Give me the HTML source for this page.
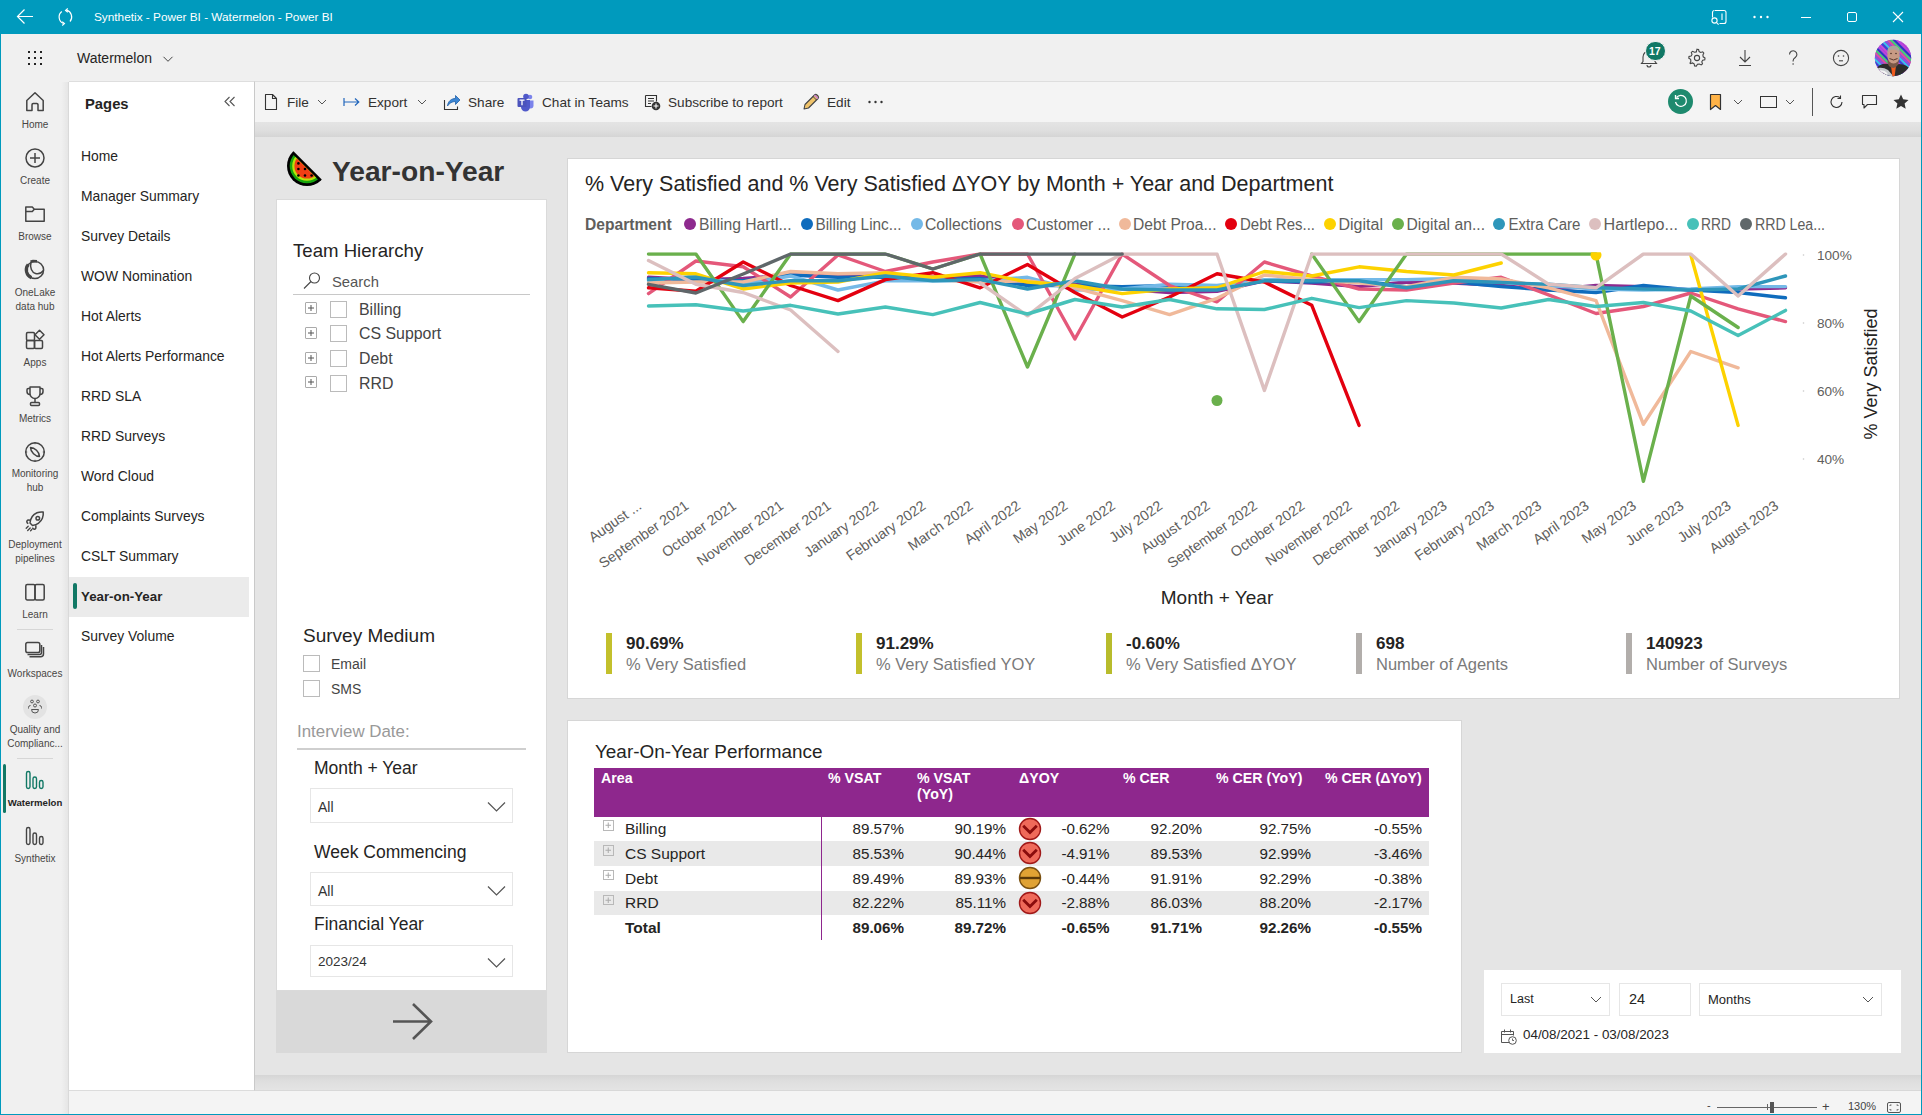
<!DOCTYPE html>
<html><head><meta charset="utf-8">
<style>
*{box-sizing:border-box}
html,body{margin:0;padding:0}
body{width:1922px;height:1115px;position:relative;overflow:hidden;background:#f0f0f0;font-family:"Liberation Sans",sans-serif;color:#252423}
.a{position:absolute}
.t{position:absolute;white-space:nowrap;line-height:1}
svg{position:absolute;overflow:visible}
</style></head><body>

<!-- title bar -->
<div class="a" style="left:0;top:0;width:1922px;height:34px;background:#009abd"></div>
<div class="a" style="left:0;top:34px;width:1px;height:1081px;background:#009abd"></div>
<div class="a" style="left:1921px;top:34px;width:1px;height:1081px;background:#009abd"></div>
<div class="a" style="left:0;top:1114px;width:1922px;height:1px;background:#009abd"></div>
<div class="t" style="left:94px;top:12px;font-size:11.8px;color:#fff">Synthetix - Power BI - Watermelon - Power BI</div>

<!-- workspace header -->
<div class="a" style="left:1px;top:34px;width:1920px;height:47px;background:#f0f0f0"></div>
<div class="t" style="left:77px;top:51px;font-size:14px;color:#252423">Watermelon</div>


<!-- title bar icons -->
<svg width="20" height="20" style="left:15px;top:7px"><path d="M2.5 9.5H18" stroke="#fff" stroke-width="1"/><path d="M9.5 2.5L2.5 9.5L9.5 16.5" fill="none" stroke="#fff" stroke-width="1.2"/></svg>
<svg width="20" height="22" style="left:55px;top:6px"><path d="M6.8 5.5A7 7 0 0 0 8.5 17.5M15 15.5A7 7 0 0 0 11.5 4.2" fill="none" stroke="#fff" stroke-width="1.2"/><path d="M12.8 2.5L10.6 4.4 12.8 6.2M7.2 15.8L9.4 17.6 7.2 19.5" fill="none" stroke="#fff" stroke-width="1.2"/></svg>
<svg width="20" height="20" style="left:1709px;top:8px"><path d="M6 2.5h9a2 2 0 0 1 2 2v9a2 2 0 0 1-2 2h-4.5M3.5 9.5V4.5a2 2 0 0 1 2-2" fill="none" stroke="#fff" stroke-width="1.1"/><path d="M13 5.5v6.5" stroke="#fff" stroke-width="1.1"/><circle cx="5.5" cy="12.5" r="2.6" fill="none" stroke="#fff" stroke-width="1.1"/><path d="M7.3 14.3l2.3 2.3" stroke="#fff" stroke-width="1.1"/></svg>
<svg width="20" height="6" style="left:1751px;top:14px"><circle cx="3.5" cy="3" r="1.2" fill="#fff"/><circle cx="10" cy="3" r="1.2" fill="#fff"/><circle cx="16.5" cy="3" r="1.2" fill="#fff"/></svg>
<div class="a" style="left:1801px;top:17px;width:10px;height:1px;background:#fff"></div>
<div class="a" style="left:1847px;top:12px;width:10px;height:10px;border:1px solid #fff;border-radius:2px"></div>
<svg width="14" height="14" style="left:1891px;top:10px"><path d="M2 2L12 12M12 2L2 12" stroke="#fff" stroke-width="1.1"/></svg>

<!-- waffle -->
<div class="a" style="left:28px;top:51px;width:2px;height:2px;background:#222"></div><div class="a" style="left:28px;top:57px;width:2px;height:2px;background:#222"></div><div class="a" style="left:28px;top:63px;width:2px;height:2px;background:#222"></div><div class="a" style="left:34px;top:51px;width:2px;height:2px;background:#222"></div><div class="a" style="left:34px;top:57px;width:2px;height:2px;background:#222"></div><div class="a" style="left:34px;top:63px;width:2px;height:2px;background:#222"></div><div class="a" style="left:40px;top:51px;width:2px;height:2px;background:#222"></div><div class="a" style="left:40px;top:57px;width:2px;height:2px;background:#222"></div><div class="a" style="left:40px;top:63px;width:2px;height:2px;background:#222"></div>
<svg width="12" height="8" style="left:162px;top:55px"><path d="M1.5 1.8l4.5 4.5 4.5-4.5" fill="none" stroke="#444" stroke-width="1"/></svg>

<!-- header right icons -->
<svg width="20" height="20" style="left:1639px;top:48px"><path d="M4 13.5V9a6 6 0 0 1 12 0v4.5l1.5 2H2.5z M8 17a2 2 0 0 0 4 0" fill="none" stroke="#444" stroke-width="1.1"/></svg>
<div class="a" style="left:1645px;top:41px;width:21px;height:20px;border-radius:10px;background:#117865;border:1.5px solid #f0f0f0"></div>
<div class="t" style="left:1649px;top:45.5px;font-size:10.5px;color:#fff;font-weight:bold">17</div>
<svg width="22" height="22" style="left:1686px;top:47px"><path d="M11 2.2l1.6.3.5 2.1 1.6.9 2-.7 1.1 1.3-.9 1.9.3 1.8 1.8 1.2-.2 1.7-2.1.5-.9 1.6.7 2-1.3 1.1-1.9-.9-1.8.3-1.2 1.8-1.7-.2-.5-2.1-1.6-.9-2 .7L4 16.1l.9-1.9-.3-1.8-1.8-1.2.2-1.7 2.1-.5.9-1.6-.7-2 1.3-1.1 1.9.9 1.8-.3z" fill="none" stroke="#444" stroke-width="1.1"/><circle cx="11" cy="11" r="2.6" fill="none" stroke="#444" stroke-width="1.1"/></svg>
<svg width="20" height="22" style="left:1735px;top:47px"><path d="M10 3V15M5 10L10 15l5-5M4 18.5h12" fill="none" stroke="#444" stroke-width="1.1"/></svg>
<svg width="16" height="22" style="left:1785px;top:47px"><path d="M4.5 7.5a3.7 3.7 0 1 1 5.8 3c-1.3.9-2.2 1.6-2.2 3.2v.8" fill="none" stroke="#444" stroke-width="1.1"/><circle cx="8.1" cy="17" r="0.8" fill="#444"/></svg>
<svg width="22" height="22" style="left:1830px;top:47px"><circle cx="11" cy="11" r="7.6" fill="none" stroke="#444" stroke-width="1.1"/><circle cx="8.5" cy="9" r="0.8" fill="#444"/><circle cx="13.5" cy="9" r="0.8" fill="#444"/><path d="M9 13.8h4" stroke="#444" stroke-width="1.1"/></svg>
<svg width="38" height="38" style="left:1874px;top:39px"><defs><clipPath id="av"><circle cx="19" cy="19" r="18.2"/></clipPath></defs><g clip-path="url(#av)"><rect width="38" height="38" fill="#8a50c8"/><path d="M-25.6 0L12.4 38" stroke="#d048d8" stroke-width="1.8"/><path d="M-22.4 0L15.6 38" stroke="#3048d8" stroke-width="1.8"/><path d="M-19.2 0L18.8 38" stroke="#30c8f0" stroke-width="1.8"/><path d="M-16.0 0L22.0 38" stroke="#9050e0" stroke-width="1.8"/><path d="M-12.8 0L25.2 38" stroke="#e050a0" stroke-width="1.8"/><path d="M-9.6 0L28.4 38" stroke="#40d870" stroke-width="1.8"/><path d="M-6.4 0L31.6 38" stroke="#2838c0" stroke-width="1.8"/><path d="M-3.2 0L34.8 38" stroke="#c040e0" stroke-width="1.8"/><path d="M0.0 0L38.0 38" stroke="#d048d8" stroke-width="1.8"/><path d="M3.2 0L41.2 38" stroke="#3048d8" stroke-width="1.8"/><path d="M6.4 0L44.4 38" stroke="#30c8f0" stroke-width="1.8"/><path d="M9.6 0L47.6 38" stroke="#9050e0" stroke-width="1.8"/><path d="M12.8 0L50.8 38" stroke="#e050a0" stroke-width="1.8"/><path d="M16.0 0L54.0 38" stroke="#40d870" stroke-width="1.8"/><path d="M19.2 0L57.2 38" stroke="#2838c0" stroke-width="1.8"/><path d="M22.4 0L60.4 38" stroke="#c040e0" stroke-width="1.8"/><path d="M25.6 0L63.6 38" stroke="#d048d8" stroke-width="1.8"/><path d="M28.8 0L66.8 38" stroke="#3048d8" stroke-width="1.8"/><path d="M32.0 0L70.0 38" stroke="#30c8f0" stroke-width="1.8"/><path d="M35.2 0L73.2 38" stroke="#9050e0" stroke-width="1.8"/>
<path d="M2 30Q6 24 14 25L19 27 25 25Q33 25 38 32V38H0z" fill="#2c2c2c"/><path d="M0 30Q8 27 14 31L20 38H0z" fill="#c8ccd0"/><path d="M3 33Q9 31 13 35" stroke="#f4f4f4" stroke-width="2" fill="none"/>
<path d="M17 27h5l-1.5 11h-2z" fill="#f05a1c"/>
<path d="M13.5 21Q13 28 19.5 29Q25 28 25 20z" fill="#7a5848"/>
<ellipse cx="19.5" cy="16.5" rx="6.2" ry="8" fill="#c89a84"/>
<path d="M13 15Q12.5 7 19.5 6.8Q26.5 7 26 15Q24 10.5 19.5 10.5Q15 10.5 13 15z" fill="#aaa49c"/>
<path d="M15.5 19.5Q19.5 22.5 23.5 19.5" stroke="#5a3a30" stroke-width="1" fill="none"/><circle cx="17" cy="14.5" r=".8" fill="#4a3028"/><circle cx="22" cy="14.5" r=".8" fill="#4a3028"/>
</g></svg>

<!-- left rail -->
<div class="a" style="left:1px;top:81px;width:68px;height:1033px;background:#f0f0f0"></div>

<!-- pages panel -->
<div class="a" style="left:61px;top:82px;width:8px;height:1032px;background:linear-gradient(90deg,rgba(0,0,0,0),rgba(0,0,0,0.05))"></div>
<div class="a" style="left:69px;top:81px;width:186px;height:1010px;background:#fff;border-right:1px solid #c9c9c9;border-bottom:1px solid #dcdcdc;border-top:1px solid #dedede"></div>
<div class="a" style="left:255px;top:81px;width:1666px;height:1px;background:#dedede"></div>


<!-- rail icons -->
<g>
<svg width="24" height="24" style="left:23px;top:90px"><path d="M3.8 20.5V10.5L12 2.8l8.2 7.7V20.5h-5.2v-5.8a1.2 1.2 0 0 0-1.2-1.2h-3.6a1.2 1.2 0 0 0-1.2 1.2v5.8z" fill="none" stroke="#444" stroke-width="1.5" stroke-linejoin="round"/></svg>
<div class="t" style="left:0;width:70px;text-align:center;top:120px;font-size:10px;color:#484644">Home</div>
<svg width="24" height="24" style="left:23px;top:146px"><circle cx="12" cy="12" r="9" fill="none" stroke="#444" stroke-width="1.5"/><path d="M12 7v10M7 12h10" stroke="#444" stroke-width="1.5"/></svg>
<div class="t" style="left:0;width:70px;text-align:center;top:176px;font-size:10px;color:#484644">Create</div>
<svg width="24" height="24" style="left:23px;top:202px"><path d="M2.8 5h6.5l2 2.2H21.2v12H2.8z M2.8 9.5h6.5l2-2.3" fill="none" stroke="#444" stroke-width="1.5" stroke-linejoin="round"/></svg>
<div class="t" style="left:0;width:70px;text-align:center;top:232px;font-size:10px;color:#484644">Browse</div>
<svg width="24" height="24" style="left:23px;top:258px"><circle cx="12" cy="12" r="8.6" fill="none" stroke="#444" stroke-width="1.5"/><path d="M5.2 6.5A8.6 8.6 0 0 0 8.5 19.8" fill="none" stroke="#444" stroke-width="3.2"/><path d="M8 4.5c-1.5 5 1 10 4.5 11s6-.5 8-3" fill="none" stroke="#444" stroke-width="1.5"/><path d="M7.5 3.8l2.5-.8 4 .3" fill="none" stroke="#444" stroke-width="2.6"/></svg>
<div class="t" style="left:0;width:70px;text-align:center;top:285.5px;font-size:10px;color:#484644;line-height:14px">OneLake<br>data hub</div>
<svg width="24" height="24" style="left:23px;top:328px"><g fill="none" stroke="#444" stroke-width="1.5" stroke-linejoin="round"><rect x="3.5" y="4.5" width="8" height="8" rx="1.2"/><rect x="3.5" y="12.5" width="8" height="8" rx="1.2"/><rect x="11.5" y="12.5" width="8" height="8" rx="1.2"/><path d="M16.5 2.2l4.5 4.5-4.5 4.5-4.5-4.5z"/></g></svg>
<div class="t" style="left:0;width:70px;text-align:center;top:358px;font-size:10px;color:#484644">Apps</div>
<svg width="24" height="24" style="left:23px;top:384px"><g fill="none" stroke="#444" stroke-width="1.5" stroke-linejoin="round"><path d="M7 3h10v6.5a5 5 0 0 1-10 0z"/><path d="M7 4.5H5.3a1.3 1.3 0 0 0-1.3 1.3v1.7a3 3 0 0 0 3 3"/><path d="M17 4.5h1.7a1.3 1.3 0 0 1 1.3 1.3v1.7a3 3 0 0 1-3 3"/><path d="M12 14.5v4"/><rect x="7.5" y="18.5" width="9" height="3" rx="1"/></g></svg>
<div class="t" style="left:0;width:70px;text-align:center;top:414px;font-size:10px;color:#484644">Metrics</div>
<svg width="24" height="24" style="left:23px;top:440px"><g fill="none" stroke="#444" stroke-width="1.5"><circle cx="12" cy="12" r="9.3"/><path d="M7.5 7.5c4 0 9 4.5 9 9-4 0-9-4.5-9-9z" stroke-linejoin="round"/><path d="M12 2.7v1.5M12 19.8v1.5M2.7 12h1.5M19.8 12h1.5" stroke-width="1"/></g></svg>
<div class="t" style="left:0;width:70px;text-align:center;top:467px;font-size:10px;color:#484644;line-height:14px">Monitoring<br>hub</div>
<svg width="24" height="24" style="left:23px;top:509px"><g fill="none" stroke="#444" stroke-width="1.5" stroke-linejoin="round"><path d="M9.5 16.5l-2.5-2.5c.5-4.5 3-8.5 7-10.2 2-.8 4.5-1 6.2-.8.2 1.7 0 4.2-.8 6.2-1.7 4-5.7 6.5-9.9 7.3z"/><circle cx="14.8" cy="9.2" r="1.8"/><path d="M7.8 11.2l-2.3-.1a1.6 1.6 0 0 0-1.4 2.5l1.1 1.1M12.8 16.2l.1 2.3a1.6 1.6 0 0 1-2.5 1.4l-1.1-1.1"/><path d="M5.2 17.2l-2 2M7.2 19l-2.5 2.5M8.8 20.5l-1.2 1.2" stroke-width="1.3" stroke-linecap="round"/></g></svg>
<div class="t" style="left:0;width:70px;text-align:center;top:537.5px;font-size:10px;color:#484644;line-height:14px">Deployment<br>pipelines</div>
<svg width="24" height="24" style="left:23px;top:580px"><g fill="none" stroke="#444" stroke-width="1.5" stroke-linejoin="round"><rect x="2.8" y="4.5" width="9.2" height="15.5" rx="1.5"/><rect x="12" y="4.5" width="9.2" height="15.5" rx="1.5"/></g></svg>
<div class="t" style="left:0;width:70px;text-align:center;top:610px;font-size:10px;color:#484644">Learn</div>
<div class="a" style="left:17px;top:629px;width:36px;height:1px;background:#d6d6d6"></div>
<svg width="24" height="24" style="left:23px;top:639px"><g fill="none" stroke="#444" stroke-width="1.5" stroke-linejoin="round"><rect x="2.8" y="3.5" width="14" height="10" rx="1.8"/><path d="M4.5 15.5h12a2 2 0 0 0 2-2V6"/><path d="M6.5 17.8h11a3 3 0 0 0 3-3V8"/></g></svg>
<div class="t" style="left:0;width:70px;text-align:center;top:669px;font-size:10px;color:#484644">Workspaces</div>
<div class="a" style="left:23px;top:695px;width:24px;height:24px;border-radius:12px;background:#e3e3e3"></div>
<svg width="24" height="24" style="left:23px;top:695px"><g fill="none" stroke="#555" stroke-width="1"><circle cx="9" cy="6.5" r="1.4"/><circle cx="15" cy="6.5" r="1.4"/><circle cx="12" cy="10.5" r="1.5"/><path d="M8.5 14.5h7a3.5 3.5 0 0 1-7 0z"/><path d="M5.5 13.5v-1a2 2 0 0 1 2-2M18.5 13.5v-1a2 2 0 0 0-2-2"/></g></svg>
<div class="t" style="left:0;width:70px;text-align:center;top:722.5px;font-size:10px;color:#484644;line-height:14px">Quality and<br>Complianc...</div>
<div class="a" style="left:17px;top:758px;width:36px;height:1px;background:#d6d6d6"></div>
<div class="a" style="left:3px;top:764px;width:3px;height:49px;background:#117865;border-radius:1.5px"></div>
<svg width="24" height="24" style="left:23px;top:768px"><g fill="none" stroke="#117865" stroke-width="1.4"><rect x="3.5" y="3.5" width="3.5" height="17" rx="1.75"/><rect x="10" y="9" width="3.5" height="11.5" rx="1.75"/><rect x="16.5" y="12.5" width="3.5" height="8" rx="1.75"/></g></svg>
<div class="t" style="left:0;width:70px;text-align:center;top:798px;font-size:9.6px;color:#252423;font-weight:bold">Watermelon</div>
<svg width="24" height="24" style="left:23px;top:824px"><g fill="none" stroke="#444" stroke-width="1.4"><rect x="3.5" y="3.5" width="3.5" height="17" rx="1.75"/><rect x="10" y="9" width="3.5" height="11.5" rx="1.75"/><rect x="16.5" y="12.5" width="3.5" height="8" rx="1.75"/></g></svg>
<div class="t" style="left:0;width:70px;text-align:center;top:854px;font-size:10px;color:#484644">Synthetix</div>
</g>

<!-- pages list -->
<div class="t" style="left:85px;top:97px;font-size:14.8px;font-weight:bold;color:#252423">Pages</div>
<svg width="14" height="12" style="left:223px;top:96px"><path d="M6.5 1L2 5.5 6.5 10M11.5 1L7 5.5 11.5 10" fill="none" stroke="#555" stroke-width="1.1"/></svg>
<div class="a" style="left:69px;top:577px;width:180px;height:40px;background:#ebebeb"></div>
<div class="a" style="left:73px;top:583px;width:4px;height:26px;background:#117865;border-radius:2px"></div>
<div class="t" style="left:81px;top:150px;font-size:13.9px;color:#252423;font-weight:normal">Home</div>
<div class="t" style="left:81px;top:190px;font-size:13.9px;color:#252423;font-weight:normal">Manager Summary</div>
<div class="t" style="left:81px;top:230px;font-size:13.9px;color:#252423;font-weight:normal">Survey Details</div>
<div class="t" style="left:81px;top:270px;font-size:13.9px;color:#252423;font-weight:normal">WOW Nomination</div>
<div class="t" style="left:81px;top:310px;font-size:13.9px;color:#252423;font-weight:normal">Hot Alerts</div>
<div class="t" style="left:81px;top:350px;font-size:13.9px;color:#252423;font-weight:normal">Hot Alerts Performance</div>
<div class="t" style="left:81px;top:390px;font-size:13.9px;color:#252423;font-weight:normal">RRD SLA</div>
<div class="t" style="left:81px;top:430px;font-size:13.9px;color:#252423;font-weight:normal">RRD Surveys</div>
<div class="t" style="left:81px;top:470px;font-size:13.9px;color:#252423;font-weight:normal">Word Cloud</div>
<div class="t" style="left:81px;top:510px;font-size:13.9px;color:#252423;font-weight:normal">Complaints Surveys</div>
<div class="t" style="left:81px;top:550px;font-size:13.9px;color:#252423;font-weight:normal">CSLT Summary</div>
<div class="t" style="left:81px;top:590px;font-size:13.3px;color:#252423;font-weight:bold">Year-on-Year</div>
<div class="t" style="left:81px;top:630px;font-size:13.9px;color:#252423;font-weight:normal">Survey Volume</div>

<!-- toolbar -->
<div class="a" style="left:255px;top:82px;width:1666px;height:40px;background:#f4f4f4"></div>
<div class="a" style="left:255px;top:122px;width:1666px;height:15px;background:linear-gradient(#e4e4e4 0%,#dedede 60%,#d5d5d5 100%)"></div>

<!-- canvas -->

<div class="a" style="left:255px;top:137px;width:1666px;height:938px;background:#e5e5e5"></div>
<div class="a" style="left:255px;top:1075px;width:1666px;height:15px;background:linear-gradient(#d5d5d5 0%,#dedede 40%,#e4e4e4 100%)"></div>
<div class="a" style="left:255px;top:1090px;width:1666px;height:1px;background:#d8d8d8"></div>
<!-- status bar -->
<div class="a" style="left:69px;top:1091px;width:1852px;height:23px;background:#f4f4f4"></div>
<div class="a" style="left:68px;top:82px;width:1px;height:1032px;background:#d9d9d9"></div>


<!-- toolbar items -->
<svg width="16" height="18" style="left:263px;top:93px"><path d="M2.5 1.5h7l4 4v11h-11z M9.5 1.5v4h4" fill="none" stroke="#333" stroke-width="1.1" stroke-linejoin="round"/></svg>
<div class="t" style="left:287px;top:96px;font-size:13.6px;color:#323130">File</div>
<svg width="10" height="6" style="left:317px;top:99px"><path d="M1 1l4 4 4-4" fill="none" stroke="#555" stroke-width="1"/></svg>
<svg width="18" height="12" style="left:343px;top:96px"><path d="M1 2v8M1 6h15M12 2.5L15.8 6 12 9.5" fill="none" stroke="#2266bb" stroke-width="1.2"/></svg>
<div class="t" style="left:368px;top:96px;font-size:13.6px;color:#323130">Export</div>
<svg width="10" height="6" style="left:417px;top:99px"><path d="M1 1l4 4 4-4" fill="none" stroke="#555" stroke-width="1"/></svg>
<svg width="18" height="18" style="left:443px;top:93px"><path d="M1.5 7v9.5h13v-3" fill="none" stroke="#333" stroke-width="1.1"/><path d="M4.5 13c.5-5 4-7.5 8-7.5V2.5L17 7l-4.5 4.5V8.5c-3.5 0-6 1.5-8 4.5z" fill="#3b86d4" stroke="#1f5fa8" stroke-width="0.8" stroke-linejoin="round"/></svg>
<div class="t" style="left:468px;top:96px;font-size:13.6px;color:#323130">Share</div>
<svg width="18" height="18" style="left:517px;top:93px"><circle cx="13" cy="4" r="2.3" fill="#7b83eb"/><path d="M10.5 7.5h6v5a3 3 0 0 1-6 0z" fill="#7b83eb"/><circle cx="9" cy="3.5" r="2.8" fill="#5059c9"/><path d="M4 7h9v7a4.5 4.5 0 0 1-9 0z" fill="#5059c9"/><rect x="0.5" y="5" width="9" height="9" rx="1" fill="#4b53bc"/><path d="M2.5 7.2h5M5 7.2v5" stroke="#fff" stroke-width="1.3"/></svg>
<div class="t" style="left:542px;top:96px;font-size:13.6px;color:#323130">Chat in Teams</div>
<svg width="18" height="18" style="left:643px;top:93px"><path d="M2.5 2.5h11v6 M2.5 2.5v11h6" fill="none" stroke="#333" stroke-width="1.1"/><path d="M5 5.5h6M5 8h6M5 10.5h3" stroke="#333" stroke-width="1"/><circle cx="13" cy="13" r="4.3" fill="#333"/><path d="M13 10.5v5M10.5 13h5" stroke="#fff" stroke-width="1.1"/></svg>
<div class="t" style="left:668px;top:96px;font-size:13.6px;color:#323130">Subscribe to report</div>
<svg width="18" height="18" style="left:802px;top:93px"><path d="M2 16l1-4.5L12.5 2a1.8 1.8 0 0 1 2.5 0l1 1a1.8 1.8 0 0 1 0 2.5L6.5 15z" fill="#f0c36a" stroke="#444" stroke-width="1.1" stroke-linejoin="round"/><path d="M11 3.5l3.5 3.5" stroke="#444" stroke-width="1"/><path d="M12.5 2L16 5.5" stroke="#c77dd6" stroke-width="1.5"/></svg>
<div class="t" style="left:827px;top:96px;font-size:13.6px;color:#323130">Edit</div>
<svg width="18" height="6" style="left:867px;top:99px"><circle cx="2.5" cy="3" r="1.2" fill="#333"/><circle cx="8.5" cy="3" r="1.2" fill="#333"/><circle cx="14.5" cy="3" r="1.2" fill="#333"/></svg>

<div class="a" style="left:1668px;top:89px;width:25px;height:25px;border-radius:13px;background:#1e8a6e"></div>
<svg width="25" height="25" style="left:1668px;top:89px"><path d="M8.5 8.5a5.5 5.5 0 1 1-1 4.5" fill="none" stroke="#fff" stroke-width="1.3"/><path d="M7.5 6v3.5H11" fill="none" stroke="#fff" stroke-width="1.3"/></svg>
<svg width="14" height="18" style="left:1709px;top:93px"><path d="M1.5 1.5h10v15l-5-4-5 4z" fill="#ffb347" stroke="#333" stroke-width="1.2" stroke-linejoin="round"/></svg>
<svg width="10" height="6" style="left:1733px;top:99px"><path d="M1 1l4 4 4-4" fill="none" stroke="#555" stroke-width="1"/></svg>
<div class="a" style="left:1760px;top:96px;width:17px;height:12px;border:1.3px solid #333"></div>
<svg width="10" height="6" style="left:1785px;top:99px"><path d="M1 1l4 4 4-4" fill="none" stroke="#555" stroke-width="1"/></svg>
<div class="a" style="left:1812px;top:88px;width:1px;height:28px;background:#555"></div>
<svg width="16" height="16" style="left:1829px;top:94px"><path d="M13 8a5.5 5.5 0 1 1-2-4.3" fill="none" stroke="#333" stroke-width="1.1"/><path d="M11.5 1.5v3h-3" fill="none" stroke="#333" stroke-width="1.1"/></svg>
<svg width="18" height="18" style="left:1861px;top:93px"><path d="M1.5 2.5h14v9h-9l-3.5 3.5v-3.5H1.5z" fill="none" stroke="#333" stroke-width="1.1" stroke-linejoin="round"/></svg>
<svg width="18" height="18" style="left:1892px;top:93px"><path d="M9 1.5l2.2 4.8 5.3.6-3.9 3.6 1.1 5.2L9 13.1l-4.7 2.6 1.1-5.2-3.9-3.6 5.3-.6z" fill="#333"/></svg>

<!-- chart card -->
<div class="a" style="left:567px;top:158px;width:1333px;height:541px;background:#fff;border:1px solid #d6d6d6"></div>
<div class="t" style="left:585px;top:174px;font-size:21.5px;color:#252423">% Very Satisfied and % Very Satisfied ΔYOY by Month + Year and Department</div>
<svg width="1922" height="1115" style="left:0;top:0">
<g font-family="Liberation Sans" font-size="15.6" fill="#605e5c">
<text x="585" y="229.5" font-weight="bold">Department</text>
<circle cx="690" cy="224" r="6" fill="#8e2a8e"/><text x="699" y="229.5" textLength="92.5" lengthAdjust="spacingAndGlyphs">Billing Hartl...</text>
<circle cx="807" cy="224" r="6" fill="#0f6cbd"/><text x="815.5" y="229.5" textLength="86" lengthAdjust="spacingAndGlyphs">Billing Linc...</text>
<circle cx="917" cy="224" r="6" fill="#74b9e7"/><text x="925" y="229.5" textLength="77" lengthAdjust="spacingAndGlyphs">Collections</text>
<circle cx="1018" cy="224" r="6" fill="#e4587a"/><text x="1026" y="229.5" textLength="84.5" lengthAdjust="spacingAndGlyphs">Customer ...</text>
<circle cx="1125" cy="224" r="6" fill="#f0b99a"/><text x="1133" y="229.5" textLength="83.5" lengthAdjust="spacingAndGlyphs">Debt Proa...</text>
<circle cx="1231" cy="224" r="6" fill="#e3000f"/><text x="1240" y="229.5" textLength="75" lengthAdjust="spacingAndGlyphs">Debt Res...</text>
<circle cx="1330" cy="224" r="6" fill="#fdd200"/><text x="1338.5" y="229.5" textLength="44.5" lengthAdjust="spacingAndGlyphs">Digital</text>
<circle cx="1398" cy="224" r="6" fill="#6ab04c"/><text x="1406.5" y="229.5" textLength="78.5" lengthAdjust="spacingAndGlyphs">Digital an...</text>
<circle cx="1499" cy="224" r="6" fill="#2e96ba"/><text x="1508.5" y="229.5" textLength="72" lengthAdjust="spacingAndGlyphs">Extra Care</text>
<circle cx="1595" cy="224" r="6" fill="#dcbfbf"/><text x="1603.5" y="229.5" textLength="74.5" lengthAdjust="spacingAndGlyphs">Hartlepo...</text>
<circle cx="1693" cy="224" r="6" fill="#47c1b9"/><text x="1701" y="229.5" textLength="30" lengthAdjust="spacingAndGlyphs">RRD</text>
<circle cx="1746" cy="224" r="6" fill="#5f676a"/><text x="1755" y="229.5" textLength="70" lengthAdjust="spacingAndGlyphs">RRD Lea...</text>
</g>
<defs><clipPath id="plot"><rect x="600" y="252.3" width="1210" height="260"/></clipPath></defs><g clip-path="url(#plot)"><polyline points="648.5,277.3 695.9,279.6 743.2,278.5 790.6,275.0 838.0,276.0 885.4,275.0 932.8,277.3 980.1,276.0 1027.5,284.3 1074.9,284.3 1122.2,289.0 1169.6,292.5 1217.0,291.3 1264.4,280.8 1311.8,283.0 1359.1,286.6 1406.5,282.0 1453.9,283.0 1501.2,285.5 1548.6,290.0 1596.0,285.5 1643.4,286.6 1690.8,290.0 1738.1,289.0 1785.5,287.8" fill="none" stroke="#8e2a8e" stroke-width="3.4" stroke-linejoin="round" stroke-linecap="round"/>
<polyline points="648.5,278.5 695.9,279.6 743.2,280.8 790.6,275.0 838.0,277.3 885.4,277.3 932.8,279.6 980.1,278.5 1027.5,285.5 1074.9,285.5 1122.2,286.6 1169.6,285.5 1217.0,289.0 1264.4,280.8 1311.8,282.0 1359.1,280.8 1406.5,286.6 1453.9,282.0 1501.2,286.6 1548.6,290.0 1596.0,292.5 1643.4,285.5 1690.8,290.0 1738.1,292.5 1785.5,297.8" fill="none" stroke="#0f6cbd" stroke-width="3.4" stroke-linejoin="round" stroke-linecap="round"/>
<polyline points="648.5,280.8 695.9,276.0 743.2,284.3 790.6,276.0 838.0,290.0 885.4,280.8 932.8,280.8 980.1,280.8 1027.5,277.3 1074.9,290.0 1122.2,289.0 1169.6,284.3 1217.0,285.5 1264.4,279.6 1311.8,279.6 1359.1,279.6 1406.5,279.6 1453.9,278.5 1501.2,282.0 1548.6,285.5 1596.0,289.0 1643.4,290.0 1690.8,289.0 1738.1,286.6 1785.5,286.6" fill="none" stroke="#74b9e7" stroke-width="3.4" stroke-linejoin="round" stroke-linecap="round"/>
<polyline points="648.5,293.6 695.9,261.0 743.2,266.8 790.6,297.0 838.0,255.0 885.4,271.5 932.8,262.0 980.1,254.0 1027.5,254.0 1074.9,339.0 1122.2,254.0 1169.6,285.5 1217.0,301.8 1264.4,262.0 1311.8,276.0 1359.1,289.0 1406.5,290.0 1453.9,283.0 1501.2,277.3 1548.6,294.8 1596.0,313.5 1643.4,306.5 1690.8,293.0 1738.1,308.8 1785.5,321.6" fill="none" stroke="#e4587a" stroke-width="3.4" stroke-linejoin="round" stroke-linecap="round"/>
<polyline points="648.5,283.0 695.9,282.0 743.2,282.0 790.6,271.5 838.0,273.8 885.4,272.7 932.8,279.6 980.1,282.0 1027.5,280.8 1074.9,287.8 1122.2,300.6 1169.6,314.6 1217.0,298.3 1264.4,275.0 1311.8,279.6 1359.1,283.0 1406.5,286.6 1453.9,277.3 1501.2,279.0 1548.6,287.8 1596.0,300.6 1643.4,424.3 1690.8,351.5 1738.1,367.8" fill="none" stroke="#f0b99a" stroke-width="3.4" stroke-linejoin="round" stroke-linecap="round"/>
<polyline points="648.5,287.8 695.9,291.3 743.2,262.0 790.6,285.5 838.0,300.6 885.4,279.6 932.8,272.7 980.1,287.8 1027.5,264.5 1074.9,292.5 1122.2,317.0 1169.6,297.0 1217.0,273.8 1264.4,282.0 1311.8,305.3 1359.1,425.4" fill="none" stroke="#e3000f" stroke-width="3.4" stroke-linejoin="round" stroke-linecap="round"/>
<polyline points="648.5,272.7 695.9,273.8 743.2,289.0 790.6,283.0 838.0,282.0 885.4,272.7 932.8,277.3 980.1,272.7 1027.5,282.0 1074.9,285.5 1122.2,293.6 1169.6,289.0 1217.0,287.8 1264.4,271.5 1311.8,276.0 1359.1,266.8 1406.5,271.5 1453.9,275.0 1501.2,263.0" fill="none" stroke="#fdd200" stroke-width="3.4" stroke-linejoin="round" stroke-linecap="round"/>
<polyline points="1690.8,255.0 1738.1,425.4" fill="none" stroke="#fdd200" stroke-width="3.4" stroke-linejoin="round" stroke-linecap="round"/>
<polyline points="648.5,254.0 695.9,254.0 743.2,321.6 790.6,254.0 838.0,254.0 885.4,254.0 932.8,269.0 980.1,254.0 1027.5,367.0 1074.9,254.0" fill="none" stroke="#6ab04c" stroke-width="3.4" stroke-linejoin="round" stroke-linecap="round"/>
<polyline points="1311.8,254.0 1359.1,321.6 1406.5,254.0 1453.9,254.0 1501.2,254.0 1548.6,254.0 1596.0,254.0 1643.4,481.4 1690.8,296.0 1738.1,327.5" fill="none" stroke="#6ab04c" stroke-width="3.4" stroke-linejoin="round" stroke-linecap="round"/>
<polyline points="648.5,279.6 695.9,277.3 743.2,285.5 790.6,280.8 838.0,280.8 885.4,276.0 932.8,280.8 980.1,279.6 1027.5,289.0 1074.9,280.8 1122.2,289.0 1169.6,290.0 1217.0,290.0 1264.4,280.8 1311.8,280.8 1359.1,280.8 1406.5,287.8 1453.9,280.8 1501.2,282.5 1548.6,284.3 1596.0,287.8 1643.4,289.0 1690.8,290.0 1738.1,289.0 1785.5,276.0" fill="none" stroke="#2e96ba" stroke-width="3.4" stroke-linejoin="round" stroke-linecap="round"/>
<polyline points="648.5,260.5 695.9,284.3 743.2,292.5 790.6,310.0 838.0,351.5" fill="none" stroke="#dcbfbf" stroke-width="3.4" stroke-linejoin="round" stroke-linecap="round"/>
<polyline points="980.1,283.0 1027.5,315.8 1074.9,278.5 1122.2,254.0 1169.6,254.0 1217.0,254.0 1264.4,390.4 1311.8,254.0 1359.1,254.0 1406.5,254.0 1453.9,254.0 1501.2,254.0 1548.6,284.3 1596.0,287.8 1643.4,254.0 1690.8,254.0 1738.1,296.0 1785.5,254.0" fill="none" stroke="#dcbfbf" stroke-width="3.4" stroke-linejoin="round" stroke-linecap="round"/>
<polyline points="648.5,306.0 695.9,304.8 743.2,311.0 790.6,305.3 838.0,314.0 885.4,307.0 932.8,314.6 980.1,302.5 1027.5,314.0 1074.9,299.5 1122.2,307.0 1169.6,299.5 1217.0,308.8 1264.4,309.5 1311.8,298.3 1359.1,307.6 1406.5,300.6 1453.9,303.0 1501.2,308.0 1548.6,299.5 1596.0,306.5 1643.4,302.5 1690.8,311.0 1738.1,335.6 1785.5,310.4" fill="none" stroke="#47c1b9" stroke-width="3.4" stroke-linejoin="round" stroke-linecap="round"/>
<polyline points="648.5,284.3 695.9,293.0 743.2,274.0 790.6,254.0 838.0,254.0 885.4,254.0 932.8,269.0 980.1,254.0 1027.5,254.0 1074.9,254.0 1122.2,254.0" fill="none" stroke="#5f676a" stroke-width="3.4" stroke-linejoin="round" stroke-linecap="round"/>
<circle cx="1596.0" cy="255" r="5.5" fill="#fdd200"/>
<circle cx="1217.0" cy="400.5" r="5.5" fill="#6ab04c"/></g>

<g font-family="Liberation Sans" font-size="13.6" fill="#605e5c">
<text x="1817" y="260">100%</text><text x="1817" y="328">80%</text><text x="1817" y="396">60%</text><text x="1817" y="464">40%</text>
</g>
<g fill="#c8c8c8"><circle cx="1803.5" cy="255" r="0.8"/><circle cx="1803.5" cy="323" r="0.8"/><circle cx="1803.5" cy="391" r="0.8"/><circle cx="1803.5" cy="459" r="0.8"/></g>
<text x="0" y="0" font-family="Liberation Sans" font-size="18" fill="#252423" text-anchor="middle" transform="translate(1877 374) rotate(-90)">% Very Satisfied</text>
<text x="1217" y="604" font-family="Liberation Sans" font-size="19" fill="#252423" text-anchor="middle">Month + Year</text>
<g font-family="Liberation Sans" font-size="14.3" fill="#605e5c">
<text x="642.5" y="508" text-anchor="end" transform="rotate(-35 642.5 508)">August ...</text>
<text x="689.9" y="508" text-anchor="end" transform="rotate(-35 689.9 508)">September 2021</text>
<text x="737.2" y="508" text-anchor="end" transform="rotate(-35 737.2 508)">October 2021</text>
<text x="784.6" y="508" text-anchor="end" transform="rotate(-35 784.6 508)">November 2021</text>
<text x="832.0" y="508" text-anchor="end" transform="rotate(-35 832.0 508)">December 2021</text>
<text x="879.4" y="508" text-anchor="end" transform="rotate(-35 879.4 508)">January 2022</text>
<text x="926.8" y="508" text-anchor="end" transform="rotate(-35 926.8 508)">February 2022</text>
<text x="974.1" y="508" text-anchor="end" transform="rotate(-35 974.1 508)">March 2022</text>
<text x="1021.5" y="508" text-anchor="end" transform="rotate(-35 1021.5 508)">April 2022</text>
<text x="1068.9" y="508" text-anchor="end" transform="rotate(-35 1068.9 508)">May 2022</text>
<text x="1116.2" y="508" text-anchor="end" transform="rotate(-35 1116.2 508)">June 2022</text>
<text x="1163.6" y="508" text-anchor="end" transform="rotate(-35 1163.6 508)">July 2022</text>
<text x="1211.0" y="508" text-anchor="end" transform="rotate(-35 1211.0 508)">August 2022</text>
<text x="1258.4" y="508" text-anchor="end" transform="rotate(-35 1258.4 508)">September 2022</text>
<text x="1305.8" y="508" text-anchor="end" transform="rotate(-35 1305.8 508)">October 2022</text>
<text x="1353.1" y="508" text-anchor="end" transform="rotate(-35 1353.1 508)">November 2022</text>
<text x="1400.5" y="508" text-anchor="end" transform="rotate(-35 1400.5 508)">December 2022</text>
<text x="1447.9" y="508" text-anchor="end" transform="rotate(-35 1447.9 508)">January 2023</text>
<text x="1495.2" y="508" text-anchor="end" transform="rotate(-35 1495.2 508)">February 2023</text>
<text x="1542.6" y="508" text-anchor="end" transform="rotate(-35 1542.6 508)">March 2023</text>
<text x="1590.0" y="508" text-anchor="end" transform="rotate(-35 1590.0 508)">April 2023</text>
<text x="1637.4" y="508" text-anchor="end" transform="rotate(-35 1637.4 508)">May 2023</text>
<text x="1684.8" y="508" text-anchor="end" transform="rotate(-35 1684.8 508)">June 2023</text>
<text x="1732.1" y="508" text-anchor="end" transform="rotate(-35 1732.1 508)">July 2023</text>
<text x="1779.5" y="508" text-anchor="end" transform="rotate(-35 1779.5 508)">August 2023</text>
</g>
</svg>

<div class="a" style="left:605.5px;top:632.5px;width:6.5px;height:41.5px;background:#c3c02c"></div><div class="t" style="left:626px;top:635px;font-size:17px;font-weight:bold;color:#252423">90.69%</div><div class="t" style="left:626px;top:656px;font-size:16.5px;color:#7a7a7a">% Very Satisfied</div>
<div class="a" style="left:855.5px;top:632.5px;width:6.5px;height:41.5px;background:#c3c02c"></div><div class="t" style="left:876px;top:635px;font-size:17px;font-weight:bold;color:#252423">91.29%</div><div class="t" style="left:876px;top:656px;font-size:16.5px;color:#7a7a7a">% Very Satisfied YOY</div>
<div class="a" style="left:1105.5px;top:632.5px;width:6.5px;height:41.5px;background:#b8bc2c"></div><div class="t" style="left:1126px;top:635px;font-size:17px;font-weight:bold;color:#252423">-0.60%</div><div class="t" style="left:1126px;top:656px;font-size:16.5px;color:#7a7a7a">% Very Satisfied ΔYOY</div>
<div class="a" style="left:1355.5px;top:632.5px;width:6.5px;height:41.5px;background:#b2aeab"></div><div class="t" style="left:1376px;top:635px;font-size:17px;font-weight:bold;color:#252423">698</div><div class="t" style="left:1376px;top:656px;font-size:16.5px;color:#7a7a7a">Number of Agents</div>
<div class="a" style="left:1625.5px;top:632.5px;width:6.5px;height:41.5px;background:#b2aeab"></div><div class="t" style="left:1646px;top:635px;font-size:17px;font-weight:bold;color:#252423">140923</div><div class="t" style="left:1646px;top:656px;font-size:16.5px;color:#7a7a7a">Number of Surveys</div>

<!-- table card -->
<div class="a" style="left:567px;top:720px;width:895px;height:333px;background:#fff;border:1px solid #d6d6d6"></div>
<div class="t" style="left:595px;top:743px;font-size:18.9px;color:#252423">Year-On-Year Performance</div>
<div class="a" style="left:594px;top:768px;width:835px;height:49px;background:#8e278d"></div>
<div class="t" style="left:601px;top:771px;font-size:14.2px;font-weight:bold;color:#fff">Area</div>
<div class="t" style="left:828px;top:771px;font-size:14.2px;font-weight:bold;color:#fff">% VSAT</div>
<div class="t" style="left:917px;top:771px;font-size:14.2px;font-weight:bold;color:#fff;line-height:15.5px">% VSAT<br>(YoY)</div>
<div class="t" style="left:1019px;top:771px;font-size:14.2px;font-weight:bold;color:#fff">ΔYOY</div>
<div class="t" style="left:1123px;top:771px;font-size:14.2px;font-weight:bold;color:#fff">% CER</div>
<div class="t" style="left:1216px;top:771px;font-size:14.2px;font-weight:bold;color:#fff">% CER (YoY)</div>
<div class="t" style="left:1325px;top:771px;font-size:14.2px;font-weight:bold;color:#fff">% CER (ΔYoY)</div>
<div class="a" style="left:594px;top:841px;width:835px;height:25px;background:#e9e9e9"></div>
<div class="a" style="left:594px;top:891px;width:835px;height:24px;background:#e9e9e9"></div>
<div class="a" style="left:821px;top:817px;width:1px;height:123px;background:#8e278d"></div>
<div class="a" style="left:603px;top:820.4px;width:10.5px;height:10.5px;border:1px solid #b8b8b8"></div><svg width="11" height="11" style="left:603px;top:820.4px"><path d="M5.25 2.5v5.5M2.5 5.25h5.5" stroke="#aaa" stroke-width="1"/></svg><div class="t" style="left:625px;top:821.1px;font-size:15.5px;color:#252423;font-weight:normal">Billing</div><div class="t" style="left:784px;width:120px;text-align:right;top:821.1px;font-size:15.2px;color:#252423;font-weight:normal">89.57%</div><div class="t" style="left:886px;width:120px;text-align:right;top:821.1px;font-size:15.2px;color:#252423;font-weight:normal">90.19%</div><div class="t" style="left:989.5px;width:120px;text-align:right;top:821.1px;font-size:15.2px;color:#252423;font-weight:normal">-0.62%</div><div class="t" style="left:1082px;width:120px;text-align:right;top:821.1px;font-size:15.2px;color:#252423;font-weight:normal">92.20%</div><div class="t" style="left:1191px;width:120px;text-align:right;top:821.1px;font-size:15.2px;color:#252423;font-weight:normal">92.75%</div><div class="t" style="left:1302px;width:120px;text-align:right;top:821.1px;font-size:15.2px;color:#252423;font-weight:normal">-0.55%</div><svg width="24" height="24" style="left:1018px;top:816.6px"><circle cx="12" cy="12" r="10.5" fill="#ef6a5a" stroke="#a01818" stroke-width="1.4"/><path d="M5.2 8.8l6.8 6.8 6.8-6.8" fill="none" stroke="#8a0c0c" stroke-width="2.8"/></svg>
<div class="a" style="left:603px;top:845.1px;width:10.5px;height:10.5px;border:1px solid #b8b8b8"></div><svg width="11" height="11" style="left:603px;top:845.1px"><path d="M5.25 2.5v5.5M2.5 5.25h5.5" stroke="#aaa" stroke-width="1"/></svg><div class="t" style="left:625px;top:845.8px;font-size:15.5px;color:#252423;font-weight:normal">CS Support</div><div class="t" style="left:784px;width:120px;text-align:right;top:845.8px;font-size:15.2px;color:#252423;font-weight:normal">85.53%</div><div class="t" style="left:886px;width:120px;text-align:right;top:845.8px;font-size:15.2px;color:#252423;font-weight:normal">90.44%</div><div class="t" style="left:989.5px;width:120px;text-align:right;top:845.8px;font-size:15.2px;color:#252423;font-weight:normal">-4.91%</div><div class="t" style="left:1082px;width:120px;text-align:right;top:845.8px;font-size:15.2px;color:#252423;font-weight:normal">89.53%</div><div class="t" style="left:1191px;width:120px;text-align:right;top:845.8px;font-size:15.2px;color:#252423;font-weight:normal">92.99%</div><div class="t" style="left:1302px;width:120px;text-align:right;top:845.8px;font-size:15.2px;color:#252423;font-weight:normal">-3.46%</div><svg width="24" height="24" style="left:1018px;top:841.3px"><circle cx="12" cy="12" r="10.5" fill="#ef6a5a" stroke="#a01818" stroke-width="1.4"/><path d="M5.2 8.8l6.8 6.8 6.8-6.8" fill="none" stroke="#8a0c0c" stroke-width="2.8"/></svg>
<div class="a" style="left:603px;top:869.8px;width:10.5px;height:10.5px;border:1px solid #b8b8b8"></div><svg width="11" height="11" style="left:603px;top:869.8px"><path d="M5.25 2.5v5.5M2.5 5.25h5.5" stroke="#aaa" stroke-width="1"/></svg><div class="t" style="left:625px;top:870.5px;font-size:15.5px;color:#252423;font-weight:normal">Debt</div><div class="t" style="left:784px;width:120px;text-align:right;top:870.5px;font-size:15.2px;color:#252423;font-weight:normal">89.49%</div><div class="t" style="left:886px;width:120px;text-align:right;top:870.5px;font-size:15.2px;color:#252423;font-weight:normal">89.93%</div><div class="t" style="left:989.5px;width:120px;text-align:right;top:870.5px;font-size:15.2px;color:#252423;font-weight:normal">-0.44%</div><div class="t" style="left:1082px;width:120px;text-align:right;top:870.5px;font-size:15.2px;color:#252423;font-weight:normal">91.91%</div><div class="t" style="left:1191px;width:120px;text-align:right;top:870.5px;font-size:15.2px;color:#252423;font-weight:normal">92.29%</div><div class="t" style="left:1302px;width:120px;text-align:right;top:870.5px;font-size:15.2px;color:#252423;font-weight:normal">-0.38%</div><svg width="24" height="24" style="left:1018px;top:866.0px"><circle cx="12" cy="12" r="10.5" fill="#e0a234" stroke="#7a5010" stroke-width="1.4"/><path d="M2 12h20" stroke="#5a3808" stroke-width="2.4"/></svg>
<div class="a" style="left:603px;top:894.5px;width:10.5px;height:10.5px;border:1px solid #b8b8b8"></div><svg width="11" height="11" style="left:603px;top:894.5px"><path d="M5.25 2.5v5.5M2.5 5.25h5.5" stroke="#aaa" stroke-width="1"/></svg><div class="t" style="left:625px;top:895.2px;font-size:15.5px;color:#252423;font-weight:normal">RRD</div><div class="t" style="left:784px;width:120px;text-align:right;top:895.2px;font-size:15.2px;color:#252423;font-weight:normal">82.22%</div><div class="t" style="left:886px;width:120px;text-align:right;top:895.2px;font-size:15.2px;color:#252423;font-weight:normal">85.11%</div><div class="t" style="left:989.5px;width:120px;text-align:right;top:895.2px;font-size:15.2px;color:#252423;font-weight:normal">-2.88%</div><div class="t" style="left:1082px;width:120px;text-align:right;top:895.2px;font-size:15.2px;color:#252423;font-weight:normal">86.03%</div><div class="t" style="left:1191px;width:120px;text-align:right;top:895.2px;font-size:15.2px;color:#252423;font-weight:normal">88.20%</div><div class="t" style="left:1302px;width:120px;text-align:right;top:895.2px;font-size:15.2px;color:#252423;font-weight:normal">-2.17%</div><svg width="24" height="24" style="left:1018px;top:890.7px"><circle cx="12" cy="12" r="10.5" fill="#ef6a5a" stroke="#a01818" stroke-width="1.4"/><path d="M5.2 8.8l6.8 6.8 6.8-6.8" fill="none" stroke="#8a0c0c" stroke-width="2.8"/></svg>
<div class="t" style="left:625px;top:919.9px;font-size:15.5px;color:#252423;font-weight:bold">Total</div><div class="t" style="left:784px;width:120px;text-align:right;top:919.9px;font-size:15.2px;color:#252423;font-weight:bold">89.06%</div><div class="t" style="left:886px;width:120px;text-align:right;top:919.9px;font-size:15.2px;color:#252423;font-weight:bold">89.72%</div><div class="t" style="left:989.5px;width:120px;text-align:right;top:919.9px;font-size:15.2px;color:#252423;font-weight:bold">-0.65%</div><div class="t" style="left:1082px;width:120px;text-align:right;top:919.9px;font-size:15.2px;color:#252423;font-weight:bold">91.71%</div><div class="t" style="left:1191px;width:120px;text-align:right;top:919.9px;font-size:15.2px;color:#252423;font-weight:bold">92.26%</div><div class="t" style="left:1302px;width:120px;text-align:right;top:919.9px;font-size:15.2px;color:#252423;font-weight:bold">-0.55%</div>

<!-- left report panel -->
<div class="a" style="left:276px;top:199px;width:271px;height:792px;background:#fff;border:1px solid #dadada"></div>
<div class="a" style="left:276px;top:991px;width:271px;height:62px;background:#d9d9d9"></div>
<svg width="50" height="50" style="left:280px;top:140px"><defs><clipPath id="wc0"><polygon points="-50,-52.3 100,97.7 -50,97.7"/></clipPath><clipPath id="wc1"><polygon points="-50,-48.5 100,101.5 -50,101.5"/></clipPath></defs>
<g clip-path="url(#wc0)"><circle cx="27" cy="26" r="20" fill="#000"/></g>
<g clip-path="url(#wc1)"><circle cx="27" cy="26" r="17.3" fill="#16a60e"/><circle cx="27" cy="26" r="14.8" fill="#b8e00a"/><circle cx="27" cy="26" r="12.6" fill="#f03e14"/></g>
<g fill="#000"><circle cx="18.4" cy="23.4" r="1.3"/><circle cx="18.4" cy="29" r="1.3"/><circle cx="25" cy="29" r="1.3"/><circle cx="18.4" cy="35.5" r="1.3"/><circle cx="25" cy="35.5" r="1.3"/><circle cx="31.6" cy="35.5" r="1.3"/></g></svg>
<div class="t" style="left:332px;top:156.5px;font-size:28.2px;font-weight:bold;color:#333">Year-on-Year</div>
<div class="t" style="left:293px;top:242px;font-size:18.6px;color:#252423">Team Hierarchy</div>
<svg width="20" height="20" style="left:302px;top:271px"><circle cx="12.5" cy="7" r="5" fill="none" stroke="#444" stroke-width="1.1"/><path d="M9 10.5L2 17.5" stroke="#444" stroke-width="1.1"/></svg>
<div class="t" style="left:332px;top:275px;font-size:14.8px;color:#555">Search</div>
<div class="a" style="left:293px;top:294px;width:237px;height:1px;background:#c8c8c8"></div>
<div class="a" style="left:305px;top:302.2px;width:12px;height:12px;border:1px solid #aaa;border-radius:1px"></div><svg width="12" height="12" style="left:305px;top:302.2px"><path d="M6 3v6M3 6h6" stroke="#555" stroke-width="1"/></svg><div class="a" style="left:330px;top:300.7px;width:17px;height:17px;border:1px solid #bbb"></div><div class="t" style="left:359px;top:301.7px;font-size:15.9px;color:#444">Billing</div>
<div class="a" style="left:305px;top:326.9px;width:12px;height:12px;border:1px solid #aaa;border-radius:1px"></div><svg width="12" height="12" style="left:305px;top:326.9px"><path d="M6 3v6M3 6h6" stroke="#555" stroke-width="1"/></svg><div class="a" style="left:330px;top:325.4px;width:17px;height:17px;border:1px solid #bbb"></div><div class="t" style="left:359px;top:326.4px;font-size:15.9px;color:#444">CS Support</div>
<div class="a" style="left:305px;top:351.6px;width:12px;height:12px;border:1px solid #aaa;border-radius:1px"></div><svg width="12" height="12" style="left:305px;top:351.6px"><path d="M6 3v6M3 6h6" stroke="#555" stroke-width="1"/></svg><div class="a" style="left:330px;top:350.1px;width:17px;height:17px;border:1px solid #bbb"></div><div class="t" style="left:359px;top:351.1px;font-size:15.9px;color:#444">Debt</div>
<div class="a" style="left:305px;top:376.3px;width:12px;height:12px;border:1px solid #aaa;border-radius:1px"></div><svg width="12" height="12" style="left:305px;top:376.3px"><path d="M6 3v6M3 6h6" stroke="#555" stroke-width="1"/></svg><div class="a" style="left:330px;top:374.8px;width:17px;height:17px;border:1px solid #bbb"></div><div class="t" style="left:359px;top:375.8px;font-size:15.9px;color:#444">RRD</div>

<div class="t" style="left:303px;top:626px;font-size:19px;color:#252423">Survey Medium</div>
<div class="a" style="left:303px;top:655px;width:17px;height:17px;border:1px solid #bbb"></div>
<div class="t" style="left:331px;top:657px;font-size:14px;color:#444">Email</div>
<div class="a" style="left:303px;top:680px;width:17px;height:17px;border:1px solid #bbb"></div>
<div class="t" style="left:331px;top:682px;font-size:14px;color:#444">SMS</div>
<div class="t" style="left:297px;top:723.5px;font-size:16.9px;color:#999">Interview Date:</div>
<div class="a" style="left:297px;top:748px;width:229px;height:2px;background:#cfcfcf"></div>
<div class="t" style="left:314px;top:760px;font-size:17.5px;color:#252423">Month + Year</div>
<div class="a" style="left:310px;top:788px;width:203px;height:35px;border:1px solid #e6e6e6"></div>
<div class="t" style="left:318px;top:800px;font-size:14px;color:#333">All</div>
<svg width="20" height="12" style="left:487px;top:801px"><path d="M1 1.5l8.5 8.5L18 1.5" fill="none" stroke="#555" stroke-width="1.2"/></svg>
<div class="t" style="left:314px;top:844px;font-size:17.5px;color:#252423">Week Commencing</div>
<div class="a" style="left:310px;top:872px;width:203px;height:34px;border:1px solid #e6e6e6"></div>
<div class="t" style="left:318px;top:884px;font-size:14px;color:#333">All</div>
<svg width="20" height="12" style="left:487px;top:885px"><path d="M1 1.5l8.5 8.5L18 1.5" fill="none" stroke="#555" stroke-width="1.2"/></svg>
<div class="t" style="left:314px;top:916px;font-size:17.5px;color:#252423">Financial Year</div>
<div class="a" style="left:310px;top:945px;width:203px;height:32px;border:1px solid #e6e6e6"></div>
<div class="t" style="left:318px;top:955px;font-size:13.5px;color:#333">2023/24</div>
<svg width="20" height="12" style="left:487px;top:957px"><path d="M1 1.5l8.5 8.5L18 1.5" fill="none" stroke="#555" stroke-width="1.2"/></svg>
<svg width="44" height="40" style="left:391px;top:1002px"><path d="M2 19.5h38M22 2l18 17.5L22 37" fill="none" stroke="#555" stroke-width="2.6"/></svg>


<!-- date slicer card -->
<div class="a" style="left:1484px;top:970px;width:417px;height:83px;background:#fff"></div>
<div class="a" style="left:1501px;top:983px;width:109px;height:33px;border:1px solid #e6e6e6"></div>
<div class="t" style="left:1510px;top:993px;font-size:12.5px;color:#252423">Last</div>
<svg width="12" height="8" style="left:1590px;top:996px"><path d="M1 1l5 5 5-5" fill="none" stroke="#555" stroke-width="1"/></svg>
<div class="a" style="left:1619px;top:983px;width:72px;height:33px;border:1px solid #e6e6e6"></div>
<div class="t" style="left:1629px;top:992px;font-size:14.5px;color:#252423">24</div>
<div class="a" style="left:1699px;top:983px;width:183px;height:33px;border:1px solid #e6e6e6"></div>
<div class="t" style="left:1708px;top:993px;font-size:13px;color:#252423">Months</div>
<svg width="12" height="8" style="left:1862px;top:996px"><path d="M1 1l5 5 5-5" fill="none" stroke="#555" stroke-width="1"/></svg>
<svg width="18" height="18" style="left:1500px;top:1028px"><path d="M9 14.5H1.5v-11h12v4 M1.5 6.5h12 M4.5 1.5v3 M10.5 1.5v3" fill="none" stroke="#555" stroke-width="1"/><circle cx="12.5" cy="12.5" r="3.8" fill="#fff" stroke="#555" stroke-width="1"/><path d="M12.5 10.5v2h1.5" fill="none" stroke="#555" stroke-width="0.9"/></svg>
<div class="t" style="left:1523px;top:1028px;font-size:13.4px;color:#252423">04/08/2021 - 03/08/2023</div>

<!-- status bar -->
<div class="t" style="left:1707px;top:1100px;font-size:11px;color:#444">-</div>
<div class="a" style="left:1717px;top:1107px;width:100px;height:1px;background:#666"></div>
<div class="a" style="left:1767px;top:1104px;width:1px;height:6px;background:#666"></div>
<div class="a" style="left:1770px;top:1102px;width:4px;height:11px;background:#555"></div>
<div class="t" style="left:1822px;top:1100px;font-size:13px;color:#444">+</div>
<div class="t" style="left:1848px;top:1101px;font-size:11px;color:#444">130%</div>
<svg width="14" height="11" style="left:1887px;top:1102px"><rect x="0.5" y="0.5" width="13" height="10" rx="1.5" fill="none" stroke="#555" stroke-width="1"/><path d="M3 4V3h1.5M9.5 3H11v1M11 7v1H9.5M4.5 8H3V7" fill="none" stroke="#555" stroke-width="0.9"/></svg>

</body></html>
